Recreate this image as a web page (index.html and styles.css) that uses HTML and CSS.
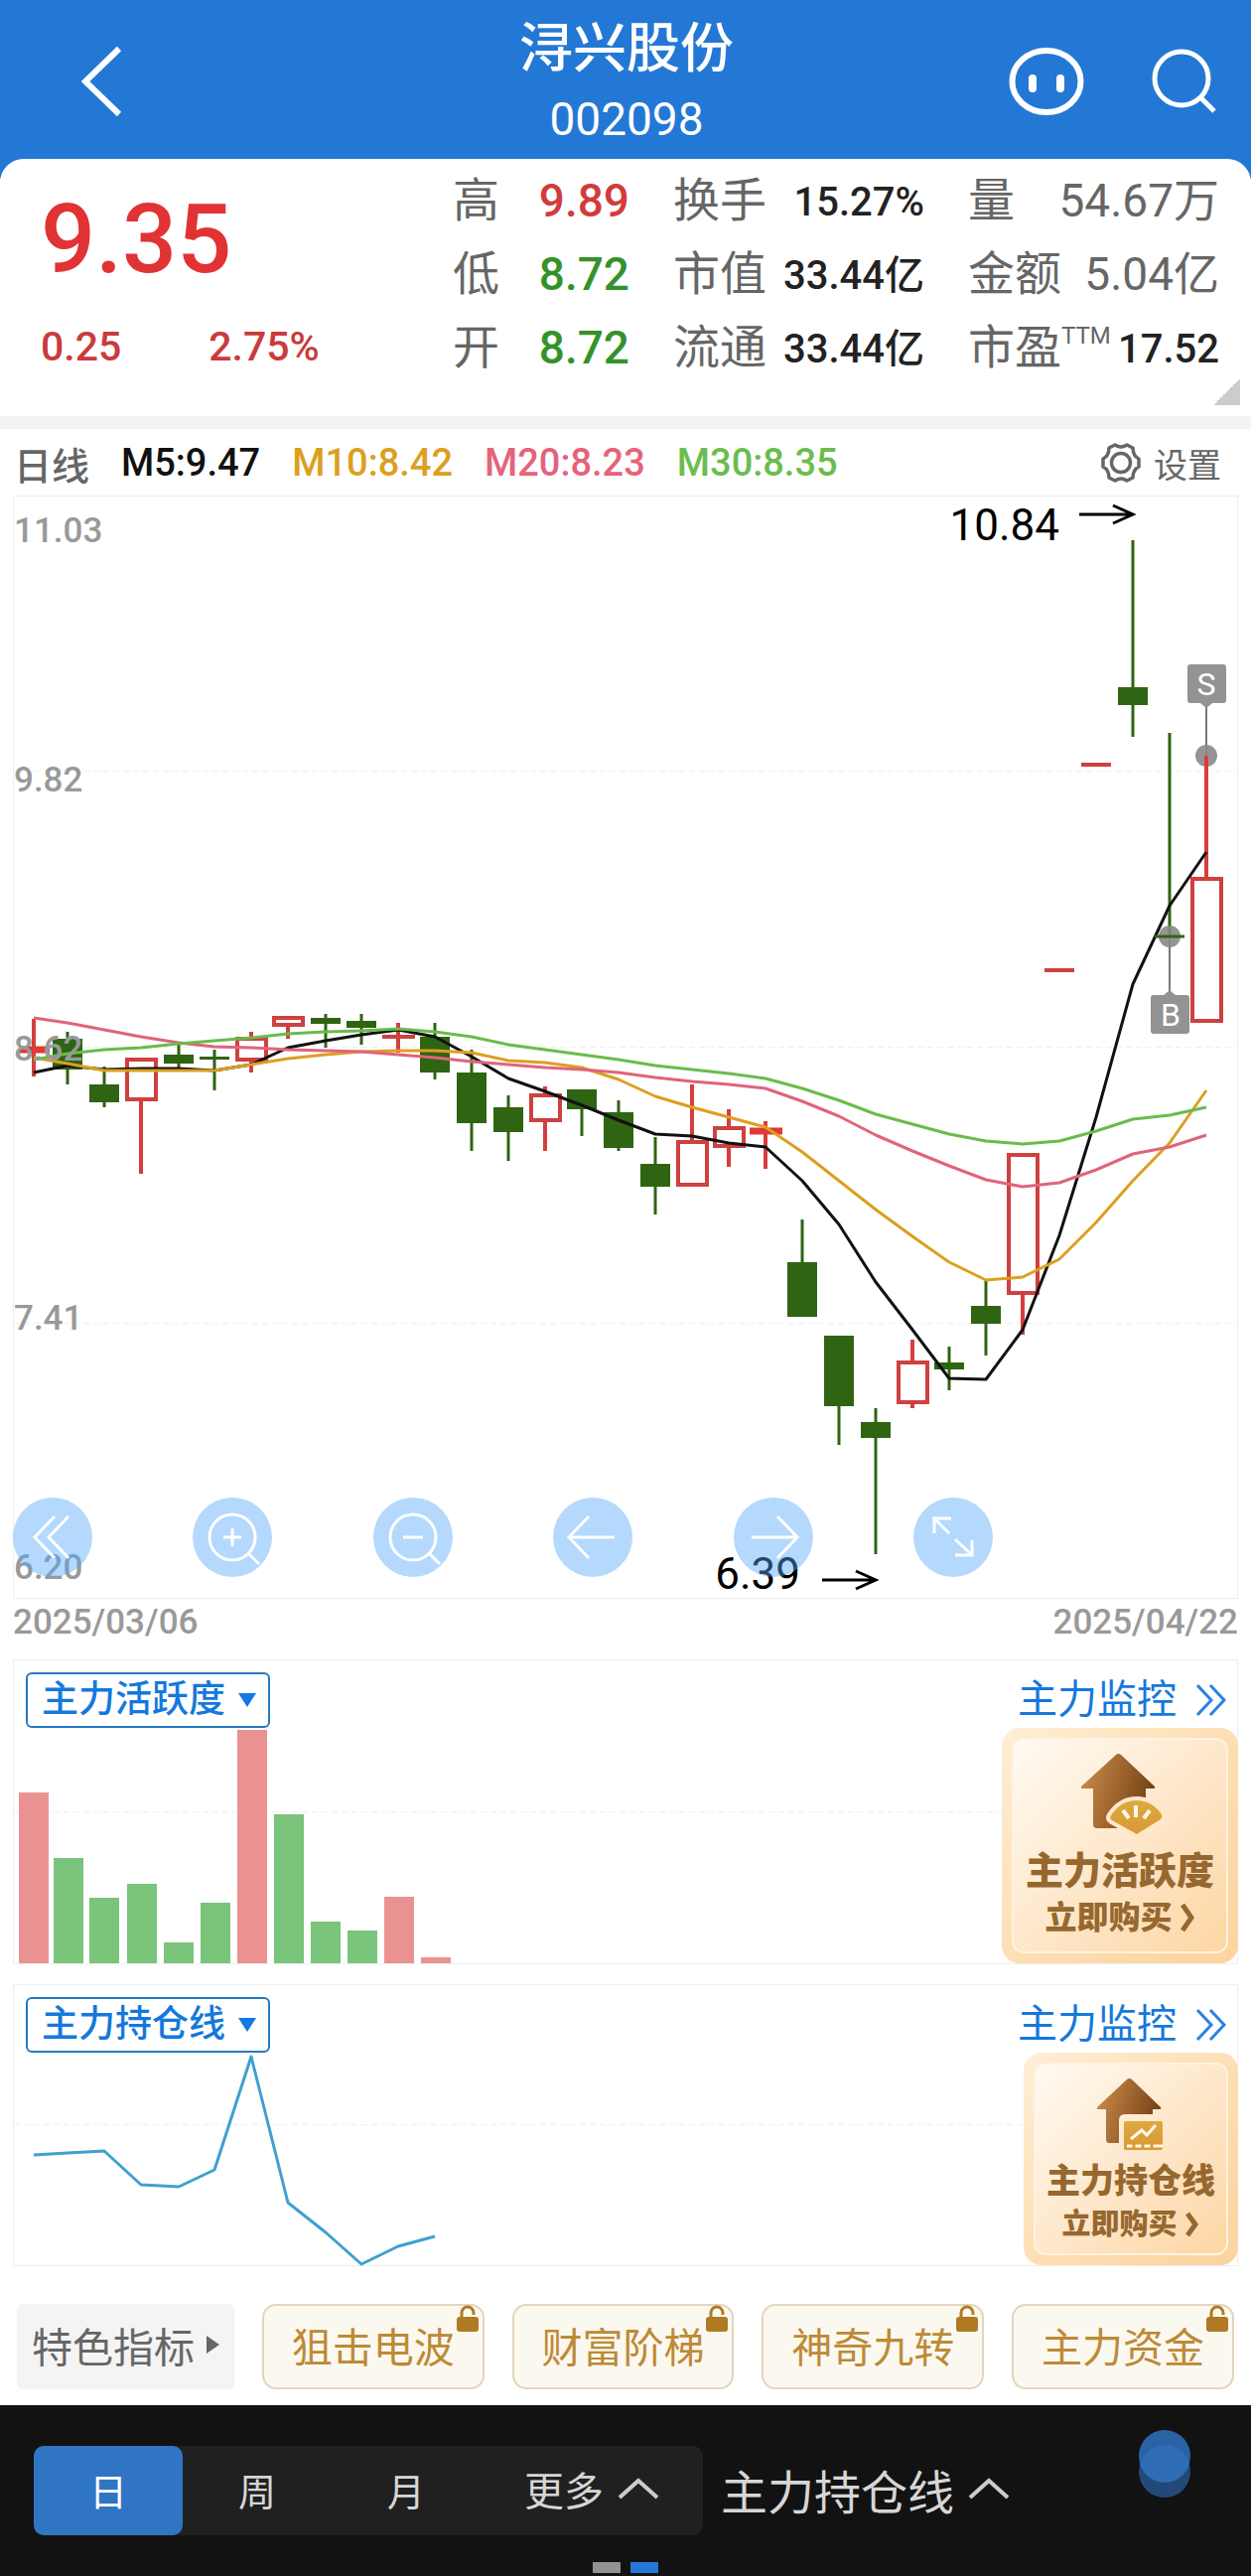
FILE: index.html
```html
<!DOCTYPE html>
<html lang="zh-CN">
<head>
<meta charset="utf-8">
<meta name="viewport" content="width=device-width, initial-scale=1">
<title>浔兴股份 002098</title>
<link rel="stylesheet" href="styles.css">
</head>
<body>
<header class="topbar">
  <button class="icon-btn back" type="button" aria-label="返回">
    <svg width="42" height="72" viewBox="0 0 42 72"><path d="M38 3 4 36l34 33" fill="none" stroke="#fff" stroke-width="6"/></svg>
  </button>
  <div class="title">
    <h1>浔兴股份</h1>
    <p>002098</p>
  </div>
  <div class="top-actions">
    <button class="icon-btn" type="button" aria-label="助手">
      <svg width="76" height="68" viewBox="0 0 76 68"><ellipse cx="38" cy="34" rx="34.500" ry="31" fill="none" stroke="#fff" stroke-width="6"/><path d="M24 31v10M52 31v10" stroke="#fff" stroke-width="8" stroke-linecap="round"/></svg>
    </button>
    <button class="icon-btn" type="button" aria-label="搜索">
      <svg width="66" height="66" viewBox="0 0 66 66"><g fill="none" stroke="#fff" stroke-width="5"><circle cx="30" cy="30" r="27"/><path d="M49 49l14 14"/></g></svg>
    </button>
  </div>
</header>

<main>
<section class="quote" aria-label="行情">
  <div class="price">
    <strong>9.35</strong>
    <div class="change"><span>0.25</span><span>2.75%</span></div>
  </div>
  <dl class="stats">
    <div><dt>高</dt><dd class="up">9.89</dd></div>
    <div><dt>低</dt><dd class="down">8.72</dd></div>
    <div><dt>开</dt><dd class="down">8.72</dd></div>
  </dl>
  <dl class="stats">
    <div><dt>换手</dt><dd class="dark">15.27%</dd></div>
    <div><dt>市值</dt><dd class="dark">33.44亿</dd></div>
    <div><dt>流通</dt><dd class="dark">33.44亿</dd></div>
  </dl>
  <dl class="stats">
    <div><dt>量</dt><dd>54.67万</dd></div>
    <div><dt>金额</dt><dd>5.04亿</dd></div>
    <div><dt>市盈<sup>TTM</sup></dt><dd class="dark">17.52</dd></div>
  </dl>
</section>

<div class="ma-row">
  <span class="period">日线</span>
  <span class="m5">M5:9.47</span>
  <span class="m10">M10:8.42</span>
  <span class="m20">M20:8.23</span>
  <span class="m30">M30:8.35</span>
  <button class="settings" type="button">
    <svg width="42" height="42" viewBox="0 0 42 42"><g fill="none" stroke="#666" stroke-width="3.500" stroke-linejoin="round"><circle cx="21" cy="21" r="9.500"/><path d="M15 3Q21 7 27 3L33 6Q33 14 39 17L39 25Q33 28 33 36L27 39Q21 35 15 39L9 36Q9 28 3 25L3 17Q9 14 9 6Z"/></g></svg>
    设置
  </button>
</div>

<section class="kline" aria-label="日线图">
  <svg class="chart" viewBox="13 499 1234 1111">
    <rect class="frame" x="13.500" y="499.500" width="1233" height="1110"/>
    <path class="grid" d="M14 776.500H1246M14 1054.500H1246M14 1332.500H1246"/>

    <path class="wick-down" d="M68 1039V1092M105 1074V1115M180 1052V1075M216 1057V1098M328 1021V1055M364 1021V1052M438 1030V1087M475 1057V1159M512 1103V1169M586 1097V1144M623 1108V1159M660 1145V1223M808 1228V1326M845 1345V1455M882 1418V1565M956 1356V1400M993 1289V1365M1141 544V742M1178 738V943"/>
    <g class="body-down">
      <rect x="53" y="1046" width="30" height="31"/><rect x="90" y="1092" width="30" height="18"/><rect x="165" y="1062" width="30" height="9"/><rect x="201" y="1064" width="30" height="3"/><rect x="313" y="1025" width="30" height="6"/><rect x="349" y="1028" width="30" height="7"/><rect x="423" y="1044" width="30" height="36"/><rect x="460" y="1080" width="30" height="51"/><rect x="497" y="1115" width="30" height="25"/><rect x="571" y="1097" width="30" height="20"/><rect x="608" y="1120" width="30" height="36"/><rect x="645" y="1172" width="30" height="23"/><rect x="793" y="1271" width="30" height="55"/><rect x="830" y="1345" width="30" height="71"/><rect x="867" y="1432" width="30" height="16"/><rect x="941" y="1372" width="30" height="7"/><rect x="978" y="1315" width="30" height="18"/><rect x="1126" y="692" width="30" height="18"/><rect x="1163" y="942" width="30" height="2"/>
    </g>
    <path class="wick-up" d="M34 1026V1084M142 1109V1182M253 1039V1044M253 1069V1080M290 1033V1046M401 1030V1060M549 1094V1102M549 1130V1159M697 1092V1148M734 1117V1135M734 1156V1175M771 1129V1177M919 1349V1370M919 1414V1418M1030 1303V1344M1215 761V883"/>
    <g class="body-up">
      <rect x="128" y="1067" width="29" height="40"/><rect x="239" y="1046" width="29" height="21"/><rect x="276" y="1025" width="29" height="7"/><rect x="535" y="1103" width="29" height="25"/><rect x="683" y="1150" width="29" height="43"/><rect x="720" y="1136" width="29" height="18"/><rect x="905" y="1372" width="29" height="40"/><rect x="1016" y="1163" width="29" height="139"/><rect x="1201" y="885" width="29" height="143"/>
    </g>
    <path class="flat-up" d="M385 1044H418M1052 977H1082M1089 770H1119"/>
    <path class="flat-up thick" d="M19 1057H50M755 1139H788"/>

    <polyline class="line m5" points="34,1080 68,1073 105,1077 142,1076 180,1076 216,1078 253,1072 290,1055 328,1048 364,1042 401,1037 438,1044 475,1064 512,1086 549,1099 586,1113 623,1128 660,1142 697,1144 734,1151 771,1155 808,1189 845,1233 882,1291 919,1339 956,1388 993,1389 1030,1339 1067,1244 1104,1125 1141,991 1178,912 1215,858"/>
    <polyline class="line m10" points="34,1065 68,1071 105,1078 142,1078 180,1078 216,1078 253,1072 290,1066 328,1062 364,1059 401,1058 438,1058 475,1060 512,1068 549,1070 586,1075 623,1087 660,1104 697,1115 734,1125 771,1135 808,1160 845,1189 882,1218 919,1245 956,1271 993,1289 1030,1286 1067,1268 1104,1231 1141,1189 1178,1151 1215,1098"/>
    <polyline class="line m20" points="34,1025 68,1030 105,1037 142,1044 180,1050 216,1054 253,1055 290,1057 328,1058 364,1059 401,1062 438,1065 475,1069 512,1072 549,1075 586,1077 623,1080 660,1085 697,1089 734,1092 771,1096 808,1109 845,1124 882,1143 919,1159 956,1174 993,1188 1030,1195 1067,1191 1104,1178 1141,1162 1178,1155 1215,1143"/>
    <polyline class="line m30" points="34,1067 68,1061 105,1057 142,1055 180,1051 216,1048 253,1045 290,1041 328,1039 364,1038 401,1036 438,1039 475,1044 512,1052 549,1057 586,1062 623,1067 660,1073 697,1077 734,1081 771,1086 808,1096 845,1108 882,1122 919,1132 956,1142 993,1149 1030,1152 1067,1149 1104,1139 1141,1127 1178,1123 1215,1115"/>

    <g class="axis">
      <text x="14" y="546">11.03</text><text x="14" y="797">9.82</text><text x="14" y="1068">8.62</text><text x="14" y="1339">7.41</text><text x="14" y="1590">6.20</text>
    </g>
    <g class="extreme">
      <text x="1067" y="544" text-anchor="end">10.84</text><text x="806" y="1600" text-anchor="end">6.39</text>
      <path d="M1087 518h54m-20-9 20 9-20 9M828 1591h54m-20-9 20 9-20 9"/>
    </g>
    <g class="marker">
      <path d="M1215 712V761M1178 943V998"/>
      <circle cx="1215" cy="761" r="11"/><circle cx="1178" cy="943" r="11"/>
      <path class="tag" d="M1199 669h33q3 0 3 3v33q0 3-3 3h-11l-6 5-6-5h-10q-3 0-3-3v-33q0-3 3-3Z"/>
      <path class="tag" d="M1162 1041h33q3 0 3-3v-33q0-3-3-3h-11l-6-5-6 5h-10q-3 0-3 3v33q0 3 3 3Z"/>
      <text x="1215" y="700">S</text><text x="1179" y="1033">B</text>
    </g>
    <path class="wick-up" d="M1215 761V800"/>
    <path class="wick-down" d="M1163 943H1193"/>
  </svg>
  <div class="tools">
    <button type="button" aria-label="最早"><svg viewBox="0 0 80 80"><path d="M42 19 22 40 42 61M56 19 36 40 56 61"/></svg></button>
    <button type="button" aria-label="放大"><svg viewBox="0 0 80 80"><circle cx="40" cy="40" r="23"/><path d="M57 57l10 10M31 40h18M40 31v18"/></svg></button>
    <button type="button" aria-label="缩小"><svg viewBox="0 0 80 80"><circle cx="40" cy="40" r="23"/><path d="M57 57l10 10M30 40h20"/></svg></button>
    <button type="button" aria-label="左移"><svg viewBox="0 0 80 80"><path d="M36 19 16 40 36 61M16 40H62"/></svg></button>
    <button type="button" aria-label="右移"><svg viewBox="0 0 80 80"><path d="M44 19 64 40 44 61M64 40H18"/></svg></button>
    <button type="button" aria-label="全屏"><svg viewBox="0 0 80 80"><path d="M21 36V21H38M21 21 36 36M59 43V58H42M59 58 42 42"/></svg></button>
  </div>
</section>
<div class="dates"><time>2025/03/06</time><time>2025/04/22</time></div>

<section class="panel activity">
  <svg class="chart" viewBox="13 1671 1234 307">
    <rect class="frame" x="13.500" y="1671.500" width="1233" height="306"/>
    <path class="grid" d="M14 1824.500H1246"/>
    <path fill="#ea9292" d="M19 1805h30v172h-30zM239 1742h30v235h-30zM387 1910h30v67h-30zM424 1971h30v6h-30z"/>
    <path fill="#7ac47b" d="M54 1871h30v106h-30zM90 1911h30v66h-30zM128 1897h30v80h-30zM165 1956h30v21h-30zM202 1916h30v61h-30zM276 1827h30v150h-30zM313 1935h30v42h-30zM350 1944h30v33h-30z"/>
  </svg>
  <div class="panel-ui">
    <div class="panel-head">
      <span class="picker">
        <select aria-label="指标一"><option>主力活跃度</option><option>主力持仓线</option></select>
        <svg width="18" height="14" viewBox="0 0 18 14"><path d="M0 0h18L9 14z" fill="#1478e6"/></svg>
      </span>
      <a class="monitor" href="#monitor">主力监控
        <svg width="30" height="34" viewBox="0 0 30 34"><path d="M1 2l14 15L1 32M14 2l14 15-14 15" fill="none" stroke="#2b82e4" stroke-width="3"/></svg>
      </a>
    </div>
    <button class="promo" type="button">
      <svg class="house" width="84" height="84" viewBox="0 0 84 84">
        <defs><linearGradient id="roof" x1="0" y1="0.300" x2="1" y2="0.600"><stop offset="0" stop-color="#c98a4a"/><stop offset="1" stop-color="#6f3e12"/></linearGradient><linearGradient id="gold" x1="0" y1="0" x2="0" y2="1"><stop offset="0" stop-color="#dca93f"/><stop offset="1" stop-color="#d99a35"/></linearGradient></defs>
        <path fill="url(#roof)" d="M37 0q2 0 3 1L74 33q1 2-1 2H65V75H16q-4 0-4-4V35H1q-2 0-1-2L35 1q1-1 2-1Z"/>
        <path d="M30 62q10-15 26-15 15 0 25 14 1 3-1 5L56 81 31 67q-3-2-1-5Z" fill="url(#gold)" stroke="#ffe8c8" stroke-width="8" paint-order="stroke"/>
        <path d="M42 57l6 8M55 52v12M69 57l-6 8" stroke="#fff8ea" stroke-width="4"/>
      </svg>
      <b>主力活跃度</b>
      <span>立即购买<svg width="15" height="28" viewBox="0 0 15 28"><path d="M2 1l9 13-9 13" fill="none" stroke="#96682f" stroke-width="5"/></svg></span>
    </button>
  </div>
</section>

<section class="panel holding">
  <svg class="chart" viewBox="13 1998 1234 284">
    <rect class="frame" x="13.500" y="1998.500" width="1233" height="283"/>
    <path class="grid" d="M14 2139.500H1246"/>
    <polyline class="line" stroke="#3fa0cf" points="34,2170 68,2168 105,2166 142,2200 180,2202 216,2185 253,2071 290,2218 328,2248 364,2280 401,2262 438,2252"/>
  </svg>
  <div class="panel-ui">
    <div class="panel-head">
      <span class="picker">
        <select aria-label="指标二"><option>主力持仓线</option><option>主力活跃度</option></select>
        <svg width="18" height="14" viewBox="0 0 18 14"><path d="M0 0h18L9 14z" fill="#1478e6"/></svg>
      </span>
      <a class="monitor" href="#monitor">主力监控
        <svg width="30" height="34" viewBox="0 0 30 34"><path d="M1 2l14 15L1 32M14 2l14 15-14 15" fill="none" stroke="#2b82e4" stroke-width="3"/></svg>
      </a>
    </div>
    <button class="promo small" type="button">
      <svg class="house" width="74" height="74" viewBox="0 0 74 74">
        <path fill="url(#roof)" d="M32 0q2 0 3 1L64 29q1 2-1 2H56V36H28q-6 0-6 6V65H12q-3 0-3-4V31H1q-2 0-1-2L30 1q1-1 2-1Z"/>
        <rect x="27" y="43" width="39" height="29" rx="2" fill="url(#gold)"/>
        <path d="M34 61l11-9 5 5 9-10M30 68h36" fill="none" stroke="#fff8ea" stroke-width="3"/><path d="M37 66v4M46 66v4M55 66v4" stroke="#d99a35" stroke-width="3"/>
      </svg>
      <b>主力持仓线</b>
      <span>立即购买<svg width="15" height="28" viewBox="0 0 15 28"><path d="M2 3l8 11-8 11" fill="none" stroke="#96682f" stroke-width="5"/></svg></span>
    </button>
  </div>
</section>

<nav class="indicators" aria-label="特色指标">
  <button class="more" type="button">特色指标<svg width="13" height="18" viewBox="0 0 13 18"><path d="M0 0l13 9-13 9z" fill="#666"/></svg></button>
  <button class="locked" type="button">狙击电波<svg class="lock" width="22" height="27" viewBox="0 0 22 27"><path d="M5 13V8a6 6 0 0 1 12 0v2" fill="none" stroke="#b07a22" stroke-width="3"/><rect y="12" width="22" height="15" rx="3" fill="#b07a22"/></svg></button>
  <button class="locked" type="button">财富阶梯<svg class="lock" width="22" height="27" viewBox="0 0 22 27"><path d="M5 13V8a6 6 0 0 1 12 0v2" fill="none" stroke="#b07a22" stroke-width="3"/><rect y="12" width="22" height="15" rx="3" fill="#b07a22"/></svg></button>
  <button class="locked" type="button">神奇九转<svg class="lock" width="22" height="27" viewBox="0 0 22 27"><path d="M5 13V8a6 6 0 0 1 12 0v2" fill="none" stroke="#b07a22" stroke-width="3"/><rect y="12" width="22" height="15" rx="3" fill="#b07a22"/></svg></button>
  <button class="locked" type="button">主力资金<svg class="lock" width="22" height="27" viewBox="0 0 22 27"><path d="M5 13V8a6 6 0 0 1 12 0v2" fill="none" stroke="#b07a22" stroke-width="3"/><rect y="12" width="22" height="15" rx="3" fill="#b07a22"/></svg></button>
</nav>
</main>

<footer class="bottombar">
  <div class="bottom-row">
    <div class="periods">
      <button class="active" type="button">日</button>
      <button type="button">周</button>
      <button type="button">月</button>
      <button class="wide" type="button">更多<svg width="42" height="22" viewBox="0 0 42 22"><path d="M2 20 21 3l19 17" fill="none" stroke="#ccc" stroke-width="4"/></svg></button>
    </div>
    <button class="indicator" type="button">主力持仓线<svg width="42" height="22" viewBox="0 0 42 22"><path d="M2 20 21 3l19 17" fill="none" stroke="#ccc" stroke-width="4"/></svg></button>
    <svg class="blob" width="54" height="70" viewBox="0 0 54 70"><circle cx="27" cy="43" r="26" fill="#23497a"/><circle cx="27" cy="27" r="26" fill="#2b62a4"/><path d="M2 35a26 26 0 0 1 50 0 26 26 0 0 1-50 0Z" fill="#2f6db6"/></svg>
  </div>
  <div class="pager"><i></i><i class="on"></i></div>
</footer>
</body>
</html>
```
FILE: styles.css
```css
* { box-sizing: border-box; }

body {
  margin: 0;
  background: #fff;
  color: #666;
  font-family: Roboto, "Noto Sans CJK SC", sans-serif;
}

h1, p, dl, dd { margin: 0; }

button, select {
  margin: 0;
  padding: 0;
  border: 0;
  background: none;
  color: inherit;
  font: inherit;
}

svg { display: block; flex: none; }

/* Header */
.topbar {
  display: grid;
  grid-template-columns: 1fr auto 1fr;
  align-items: center;
  height: 180px;
  padding: 4px 34px 20px 82px;
  background: #2478d5;
  color: #fff;
}
.title { text-align: center; padding-right: 46px; }
.title h1 { font-size: 54px; line-height: 72px; font-weight: 500; }
.title p { font-size: 46px; line-height: 60px; padding-top: 4px; }
.back { justify-self: start; }
.top-actions { display: flex; align-items: center; justify-content: flex-end; gap: 68px; }

/* Quote */
.quote {
  display: grid;
  grid-template-columns: 1fr 178px 253px 253px;
  gap: 44px;
  margin-top: -20px;
  height: 272px;
  padding: 5px 32px 0 41px;
  border-bottom: 13px solid #f3f3f3;
  border-radius: 24px 24px 0 0;
  background:
    linear-gradient(135deg, transparent 50%, #ccc 50%) right 11px bottom 11px / 27px 27px no-repeat #fff;
}
.price { color: #e13234; font-weight: 500; white-space: nowrap; }
.price strong { display: block; padding-top: 16px; font-size: 97px; line-height: 120px; font-weight: 500; }
.change { display: flex; gap: 88px; padding-top: 20px; font-size: 41px; line-height: 56px; color: #c93b3c; }
.stats > div { display: flex; justify-content: space-between; align-items: center; height: 74px; white-space: nowrap; }
.stats dt { font-size: 47px; line-height: 74px; }
.stats dd { font-size: 46px; line-height: 74px; }
.stats .up { color: #d13c3c; font-weight: 500; }
.stats .down { color: #35922b; font-weight: 500; }
.stats .dark { padding-top: 4px; color: #222; font-size: 40px; font-weight: 500; }
.stats sup { font-size: 24px; line-height: 24px; vertical-align: 20px; }

/* Moving averages */
.ma-row {
  display: flex;
  align-items: center;
  gap: 32px;
  height: 67px;
  padding: 1px 30px 0 14px;
  font-size: 38px;
  font-weight: 500;
  white-space: nowrap;
}
.period { font-weight: 500; }
.ma-row .m5 { color: #111; }
.ma-row .m10 { color: #dc9f1f; }
.ma-row .m20 { color: #e5637a; }
.ma-row .m30 { color: #6bbd4d; }
.settings { display: flex; align-items: center; gap: 12px; margin-left: auto; font-size: 34px; font-weight: 400; }

/* Charts */
.chart { width: 100%; height: auto; }
.frame { fill: none; stroke: #eee; }
.grid { stroke: #f0f0f0; stroke-dasharray: 6 4; }
.kline, .panel { position: relative; margin: 0 13px; }
.wick-down { stroke: #2f6413; stroke-width: 3; }
.body-down { fill: #2f6413; }
.wick-up { stroke: #d83d3d; stroke-width: 4; }
.body-up { fill: none; stroke: #cf4040; stroke-width: 4; }
.flat-up { stroke: #cf4040; stroke-width: 4; }
.flat-up.thick { stroke: #e03a35; stroke-width: 7; }
.line { fill: none; stroke-width: 3; stroke-linejoin: round; }
.line.m5 { stroke: #111; }
.line.m10 { stroke: #dc9f1f; }
.line.m20 { stroke: #e0647a; }
.line.m30 { stroke: #6abb4c; }
.axis { fill: #999; font-size: 35px; font-weight: 500; }
.extreme { fill: #000; font-size: 44px; }
.extreme path { fill: none; stroke: #000; stroke-width: 3; }
.marker path { stroke: #777; stroke-width: 2; }
.marker circle { fill: #888; fill-opacity: 0.9; }
.marker .tag { fill: #939393; stroke: none; }
.marker text { fill: #fff; font-size: 32px; text-anchor: middle; }

.tools {
  position: absolute;
  left: 0;
  bottom: 22px;
  display: flex;
  justify-content: space-between;
  width: 80%;
}
.tools button { width: 80px; height: 80px; border-radius: 50%; background: rgba(80, 166, 250, 0.43); }
.tools svg { fill: none; stroke: #fff; stroke-width: 3; }

.dates {
  display: flex;
  justify-content: space-between;
  height: 61px;
  padding: 0 13px;
  color: #999;
  font-size: 35px;
  line-height: 48px;
  font-weight: 500;
}

/* Indicator panels */
.panel { display: grid; }
.panel > * { grid-area: 1 / 1; }
.panel-ui { display: flex; flex-direction: column; align-items: flex-end; padding-bottom: 1px; }
.panel-head {
  display: flex;
  justify-content: space-between;
  align-items: center;
  align-self: stretch;
  height: 69px;
  padding: 13px 12px 0 13px;
}
.panel + .panel { margin-top: 20px; }
.picker { position: relative; }
.picker select {
  appearance: none;
  display: block;
  width: 246px;
  height: 56px;
  padding-left: 14px;
  border: 2px solid #2479c0;
  border-radius: 6px;
  background: #fff;
  color: #1478dc;
  font-size: 37px;
  line-height: 52px;
  font-weight: 500;
}
.picker svg { position: absolute; right: 14px; top: 21px; pointer-events: none; }
.monitor {
  display: flex;
  align-items: center;
  gap: 20px;
  color: #1478dc;
  font-size: 40px;
  line-height: 48px;
  text-decoration: none;
}
.promo {
  position: relative;
  display: flex;
  flex-direction: column;
  align-items: center;
  flex: 1;
  width: 238px;
  padding-top: 26px;
  border-radius: 18px;
  background: linear-gradient(135deg, #ffeed6, #fddcae 60%, #fcd3a0);
  color: #96682f;
}
.promo::before {
  content: "";
  position: absolute;
  inset: 10px;
  border: 2px solid #fff3e0;
  border-radius: 12px;
  background: linear-gradient(135deg, #fffaf2, #fee6c8 55%, #fdd6a3);
}
.promo > * { position: relative; }
.house { margin-left: 6px; }
.promo b { font-size: 38px; line-height: 48px; padding-top: 10px; font-weight: 900; }
.promo span { display: flex; align-items: center; gap: 8px; font-size: 32px; line-height: 46px; font-weight: 900; }
.promo.small { width: 216px; }
.promo.small b { font-size: 34px; line-height: 46px; padding-top: 6px; }
.promo.small span { font-size: 29px; line-height: 42px; }

/* Featured indicators */
.indicators {
  display: grid;
  grid-template-columns: 219fr repeat(4, 224fr);
  gap: 28px;
  padding: 38px 17px 16px;
  font-size: 41px;
}
.indicators button { height: 86px; padding-bottom: 4px; white-space: nowrap; }
.indicators .more {
  display: flex;
  align-items: center;
  justify-content: center;
  gap: 12px;
  border-radius: 6px;
  background: #f4f4f4;
}
.indicators .locked {
  position: relative;
  border: 2px solid #e3d5bd;
  border-radius: 14px;
  background: #fbf8f0;
  color: #bd8a36;
}
.lock { position: absolute; top: -1px; right: 4px; }

/* Bottom bar */
.bottombar { padding: 24px 60px 2px 34px; background: #121212; color: #d6d6d6; }
.bottom-row { display: flex; align-items: flex-start; height: 134px; white-space: nowrap; }
.periods { display: flex; width: 674px; margin-top: 17px; border-radius: 10px; background: #202020; font-size: 38px; }
.periods button { width: 150px; height: 90px; padding-bottom: 4px; }
.periods .active { border-radius: 10px; background: #3075c4; color: #fff; }
.periods .wide { display: flex; flex: 1; align-items: center; justify-content: center; gap: 14px; font-size: 40px; }
.indicator { display: flex; align-items: center; gap: 14px; height: 90px; margin: 17px 0 0 18px; padding-bottom: 4px; font-size: 47px; }
.blob { margin-left: auto; }
.pager { display: flex; justify-content: center; gap: 10px; height: 12px; margin-right: -26px; }
.pager i { width: 28px; height: 11px; background: #929292; }
.pager .on { background: #2478d5; }
```
